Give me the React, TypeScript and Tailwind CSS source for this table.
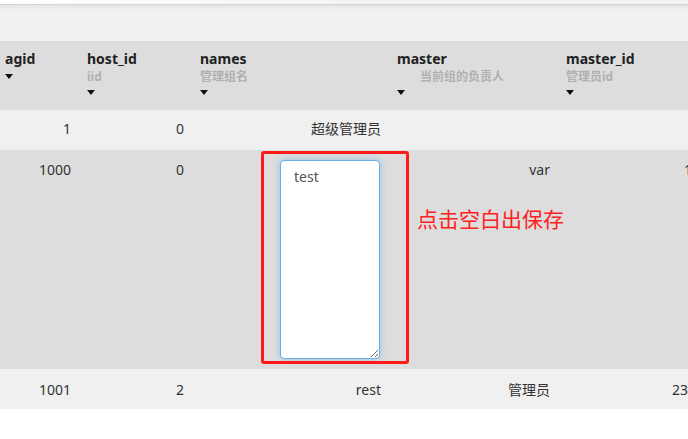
import React from 'react';

const font = { fontFamily: '"Noto Sans", "Noto Sans CJK SC", sans-serif' };

function Arrow() {
  return (
    <div className="mt-[5px] h-[6px] w-[8px]">
      <svg width="8" height="5" viewBox="0 0 8 5">
        <path d="M0 0 L8 0 L4 5 Z" fill="#111" />
      </svg>
    </div>
  );
}

function Head({ title, sub, pad = 'pl-2', subClass = '' }: { title: string; sub?: string; pad?: string; subClass?: string }) {
  return (
    <th className={`${pad} pt-2 pb-[14px] text-left align-top font-normal`}>
      <div className="text-[14px] font-bold leading-[20px] text-[#222]">{title}</div>
      {sub && <div className={`text-[12px] font-bold leading-[16px] text-[#b0b0b0] ${subClass}`}>{sub}</div>}
      <Arrow />
    </th>
  );
}

export default function App() {
  return (
    <div className="h-[439px] w-[688px] overflow-hidden bg-white" style={font}>
      {/* top bar */}
      <div className="h-[41px] bg-[#f1f1f1]">
        <div className="h-[4px] bg-gradient-to-r from-white via-[#f4f4f4] to-[#f4f4f4]" />
        <div className="h-[6px] border-t border-[#d6d6d6] bg-gradient-to-b from-[#e2e2e2] to-[#f1f1f1]" />
      </div>

      <div className="relative">
        <table className="w-[800px] table-fixed border-collapse text-[14px] text-[#333]">
          <colgroup>
            <col className="w-[79px]" />
            <col className="w-[113px]" />
            <col className="w-[197px]" />
            <col className="w-[169px]" />
            <col className="w-[242px]" />
          </colgroup>
          <thead className="bg-[#dddddd]">
            <tr className="h-[69px]">
              <Head title="agid" pad="pl-[5px]" />
              <Head title="host_id" sub="iid" />
              <Head title="names" sub="管理组名" />
              <Head title="master" sub="当前组的负责人" subClass="pl-[23px]" />
              <Head title="master_id" sub="管理员id" />
            </tr>
          </thead>
          <tbody>
            <tr className="h-[40px] bg-[#f0f0f0]">
              <td className="pb-[3px] pr-2 text-right">1</td>
              <td className="pb-[3px] pr-2 text-right">0</td>
              <td className="pb-[3px] pr-2 text-right">超级管理员</td>
              <td className="pr-2 text-right"></td>
              <td className="pr-2 text-right"></td>
            </tr>
            <tr className="h-[219px] bg-[#dddddd] align-top">
              <td className="pt-[9px] pr-2 text-right">1000</td>
              <td className="pt-[9px] pr-2 text-right">0</td>
              <td className="pt-[10px] pr-[9px] text-right">
                <div className="flex justify-end">
                  <textarea
                    defaultValue="test"
                    className="h-[199px] w-[100px] resize-y rounded-[4px] border border-[#66afe9] bg-white px-[13px] py-[6px] text-[14px] leading-[20px] text-[#555] shadow-[0_0_6px_rgba(102,175,233,0.6)] outline-none"
                    style={font}
                  />
                </div>
              </td>
              <td className="pt-[9px] pr-2 text-right">var</td>
              <td className="pt-[9px] pr-[36px] text-right">1000000000</td>
            </tr>
            <tr className="h-[40px] bg-[#f0f0f0]">
              <td className="pr-2 text-right">1001</td>
              <td className="pr-2 text-right">2</td>
              <td className="pr-2 text-right">rest</td>
              <td className="pr-2 text-right">管理员</td>
              <td className="pr-[40px] text-right">23232323232</td>
            </tr>
          </tbody>
        </table>

        {/* annotation */}
        <div className="pointer-events-none absolute left-[261px] top-[110px] h-[213px] w-[148px] rounded-[3px] border-[3px] border-[#ff1a1a]" />
        <div className="absolute left-[417px] top-[164px] text-[21px] leading-[28px] text-[#ff2020]">点击空白出保存</div>
      </div>
    </div>
  );
}
